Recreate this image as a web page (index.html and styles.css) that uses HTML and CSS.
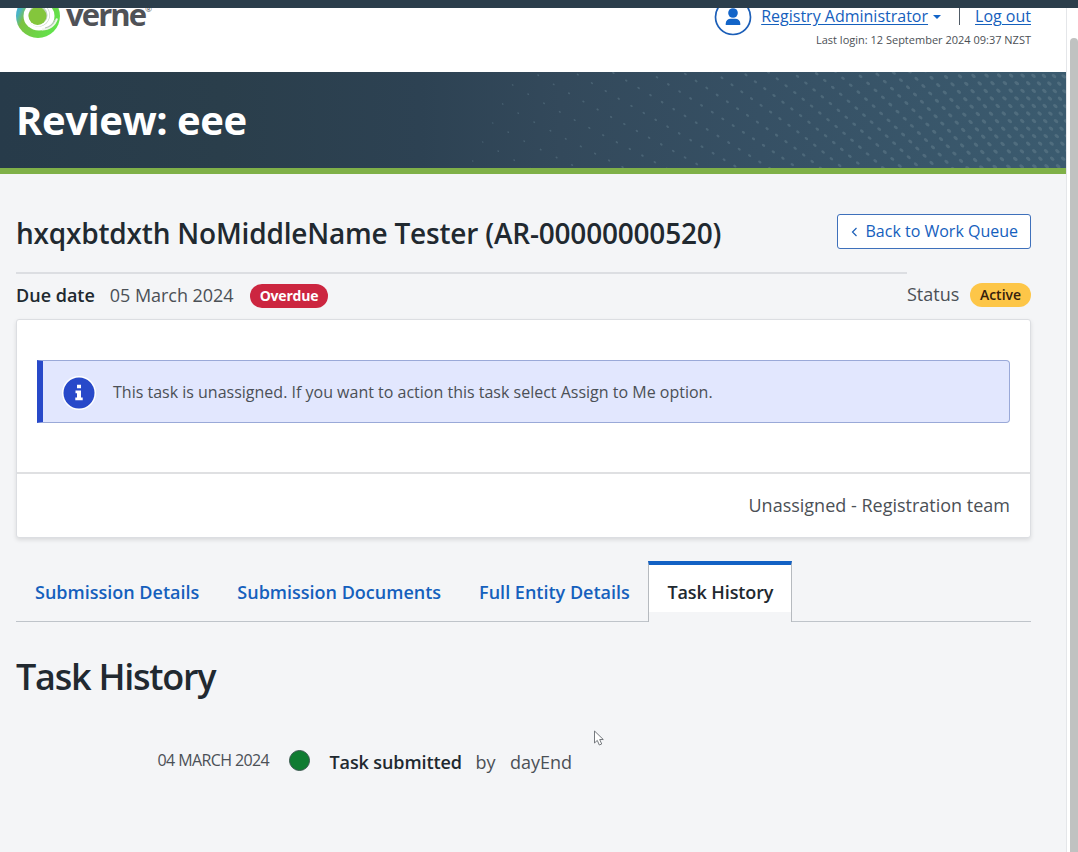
FILE: index.html
```
<!DOCTYPE html>
<html lang="en">
<head>
<meta charset="utf-8">
<title>Review: eee</title>
<link rel="stylesheet" href="styles.css">
</head>
<body>
<div class="window">
  <div class="topbar"></div>
  <div class="viewport">
    <div class="page">
      <header class="header">
        <div class="brand">
          <svg class="brand-mark" viewBox="0 0 46 46" width="46" height="46">
            <defs><linearGradient id="ring" x1="0" y1="0" x2="1" y2="0.500"><stop offset="0" stop-color="#35a9e8"/><stop offset=".22" stop-color="#4bb4c4"/><stop offset=".36" stop-color="#7cc242"/><stop offset="1" stop-color="#62e24a"/></linearGradient></defs>
            <circle cx="22" cy="22" r="22" fill="url(#ring)"/>
            <ellipse cx="23" cy="22" rx="15.500" ry="14.500" fill="#fff"/>
            <circle cx="22.500" cy="21" r="11.500" fill="#c3d3c4"/>
            <circle cx="22" cy="21" r="10.500" fill="none" stroke="#fff" stroke-width="1.800"/>
            <circle cx="21.500" cy="22" r="9" fill="#84c63c"/>
            <path d="M26 35.500c7 0 13-4 15-11" fill="none" stroke="#eef5ea" stroke-width="2"/>
            <path d="M29 34c5-1 8-4 10-8" fill="none" stroke="#b9c6bb" stroke-width="1.200"/>
          </svg>
          <span class="brand-name">verne</span><span class="brand-reg">®</span>
        </div>
        <div class="user">
          <svg class="avatar" viewBox="0 0 38 38" width="38" height="38">
            <circle cx="19" cy="19" r="17.500" fill="#fff" stroke="#1c5fb8" stroke-width="1.700"/>
            <circle cx="19" cy="15" r="4.800" fill="#1264c8"/>
            <path d="M11.700 27v-1.500a5 5 0 0 1 5-4.800h4.600a5 5 0 0 1 5 4.800V27z" fill="#1264c8"/>
          </svg>
          <div class="account">
            <div class="account-links">
              <a class="link link-user">Registry Administrator</a>
              <span class="caret"></span><span class="separator"></span>
              <a class="link link-logout">Log out</a>
            </div>
            <div class="last-login">Last login: 12 September 2024 09:37 NZST</div>
          </div>
        </div>
      </header>
      <div class="banner">
        <svg class="banner-dots" id="dots" viewBox="0 72 1066 96" width="1066" height="96"></svg>
        <h1 class="banner-title">Review: eee</h1>
      </div>
      <main class="main">
        <div class="title-row">
          <h2 class="entity-title">hxqxbtdxth NoMiddleName Tester (AR-00000000520)</h2>
          <a class="back"><svg viewBox="0 0 7 10" width="7" height="10"><path d="M5.500 1 1.500 5l4 4" fill="none" stroke="#1c5fb8" stroke-width="1.200"/></svg><span>Back to Work Queue</span></a>
        </div>
        <div class="meta">
          <div class="due"><b class="due-label">Due date</b><span class="due-value">05 March 2024</span><span class="badge badge-overdue">Overdue</span></div>
          <div class="status"><span class="status-label">Status</span><span class="badge badge-active">Active</span></div>
        </div>
        <section class="card">
          <div class="card-body">
            <div class="alert">
              <svg class="alert-icon" viewBox="0 0 34 34" width="34" height="34"><circle cx="17" cy="17" r="17" fill="#fff"/><circle cx="17" cy="17" r="15.500" fill="#2849c9"/><path d="M15 8.800h4v3.500h-4zM13.500 14.500H19v7h1.700v2.700h-7.400v-2.700H15v-4.300h-1.500z" fill="#fff"/></svg>
              <span class="alert-text">This task is unassigned. If you want to action this task select Assign to Me option.</span>
            </div>
          </div>
          <div class="card-foot"><span class="assignee">Unassigned - Registration team</span></div>
        </section>
        <nav class="tabs">
          <a class="tab">Submission Details</a><a class="tab">Submission Documents</a><a class="tab">Full Entity Details</a><a class="tab tab-active">Task History</a>
        </nav>
        <h2 class="section-title">Task History</h2>
        <div class="event">
          <span class="event-date">04 MARCH 2024</span>
          <span class="event-dot"></span>
          <b class="event-name">Task submitted</b><span class="event-by">by</span><span class="event-user">dayEnd</span>
        </div>
      </main>
    </div>
    <div class="scrollbar"><div class="thumb"></div></div>
  </div>
  <svg class="cursor" viewBox="0 0 12 18" width="12" height="18"><path d="M1.500 1v12l2.800-2.600 2 4.600 2.400-1-2-4.500h3.600z" fill="#fff" stroke="#666b70" stroke-width=".9"/></svg>
</div>
<script src="dots.js"></script>
</body>
</html>
```
FILE: styles.css
```
* { box-sizing: border-box; }
body { margin: 0; font-family: "Open Sans", sans-serif; color: #4b5056; font-size: 18px; }
h1, h2 { margin: 0; }
b, h2 { font-weight: 600; }
span, a, h1, h2 { white-space: nowrap; }
.window { position: relative; width: 1078px; height: 852px; overflow: hidden; display: flex; flex-direction: column; background: #f4f5f7; }
.topbar { height: 8px; background: #2b3e4b; flex: none; }
.viewport { flex: 1; display: flex; min-height: 0; }
.page { width: 1067px; overflow: hidden; border-right: 1px solid #e4e6e9; }
.header { height: 64px; background: #fff; display: flex; justify-content: space-between; padding: 0 35px 0 16px; }
.brand { display: flex; margin-top: -14px; height: 46px; }
.brand-name { font-size: 31px; font-weight: 700; letter-spacing: -1.9px; color: #505257; line-height: 40px; margin: 0 0 0 4px; }
.brand-reg { font-size: 8px; line-height: 12px; margin: 9px 0 0 0; }
.user { display: flex; }
.avatar { margin: -10px 9px 0 0; }
.account { display: flex; flex-direction: column; align-items: flex-end; }
.account-links { display: flex; height: 26px; margin-top: -4px; line-height: 24px; font-size: 16px; }
.link { color: #1560bd; text-decoration: underline; text-underline-offset: 2px; }
.caret { border: 4px solid transparent; border-top-color: #1264c8; border-bottom: 0; height: 4px; margin: 11px 17px 0 5px; }
.separator { width: 1px; height: 20px; background: #505b66; margin: 1px 15px 0 1px; }
.last-login { font-size: 11px; line-height: 18px; margin-top: 1px; }
.banner { height: 102px; border-bottom: 6px solid #7fb048; background: linear-gradient(90deg, #273b4a 0, #2a3e4b 220px, #2d4253 420px, #33495b 560px, #365064 760px, #3b5b6f 1066px); position: relative; }
.banner-dots { position: absolute; inset: 0; }
.banner-title { position: relative; font-size: 40px; font-weight: 700; line-height: 96px; letter-spacing: -.45px; color: #fff; padding-left: 16px; }
.main { padding: 40px 35px 0 16px; }
.title-row { display: flex; justify-content: space-between; height: 58px; }
.entity-title { font-size: 28px; line-height: 38px; letter-spacing: -.2px; color: #212930; }
.back { height: 35px; width: 194px; border: 1px solid #3e70bb; border-radius: 3px; background: #fff; color: #1560bd; font-size: 16px; line-height: 33px; display: flex; align-items: center; justify-content: space-between; padding: 0 12px 0 13px; }
.meta { display: flex; height: 47px; }
.due { width: 891px; border-top: 2px solid #dcdee2; display: flex; line-height: 42px; }
.due-label { color: #212930; }
.due-value { margin-left: 15px; letter-spacing: -.05px; }
.badge { height: 24px; border-radius: 12px; font-size: 14px; font-weight: 600; line-height: 24px; text-align: center; }
.badge-overdue { width: 78px; margin: 10px 0 0 16.5px; background: #cc2640; color: #fff; font-weight: 700; letter-spacing: -.2px; }
.status { display: flex; flex: 1; justify-content: space-between; line-height: 44px; }
.badge-active { width: 61px; margin-top: 11px; background: #fdc648; color: #35200d; }
.card { height: 219px; border: 1px solid #dcdee2; border-radius: 3px; background: #fff; box-shadow: 0 2px 4px #0000001c; }
.card-body { height: 154px; padding: 40px 20px 0; border-bottom: 2px solid #dfe0e2; }
.alert { height: 63px; border: 1px solid #9aa9d8; border-left: 6px solid #2849c9; border-radius: 0 4px 4px 0; background: #e2e7fe; display: flex; align-items: flex-start; padding-left: 19px; }
.alert-icon { margin: 15px 17px 0 0; }
.alert-text { font-size: 16px; line-height: 63px; height: 61px; }
.card-foot { height: 63px; line-height: 63px; padding-right: 20px; text-align: right; }
.tabs { display: flex; height: 61px; margin-top: 23px; box-shadow: inset 0 -1px #bfc4ca; }
.tab { padding: 0 19px; color: #1560bd; font-weight: 600; line-height: 62px; }
.tab-active { background: linear-gradient(#fff 47px, #f4f5f7 47px); border: 1px solid #b6babf; border-top: 4px solid #1261c4; border-bottom: 0; padding: 0 18px; margin-left: -.4px; color: #212930; line-height: 54px; letter-spacing: -.1px; }
.section-title { font-size: 36px; line-height: 50px; margin-top: 30px; letter-spacing: -1.25px; color: #212930; }
.event { display: flex; align-items: center; height: 30px; margin: 45px 0 0 141.5px; }
.event-date { font-size: 16px; letter-spacing: -.6px; width: 132px; position: relative; top: -2px; }
.event-dot { width: 21px; height: 21px; border-radius: 50%; background: #107c32; border: 1px solid #3b5750; margin: -4px 20px 0 -1px; }
.event-name { color: #212930; width: 146px; letter-spacing: -.1px; }
.event-by { width: 34.5px; }
.scrollbar { width: 11px; background: #fff; padding: 30px 0 0 3px; }
.thumb { height: 814px; background: #c0c2c1; border-radius: 4px 4px 0 0; }
.cursor { position: absolute; left: 593px; top: 730px; }
```
FILE: dots.js
```
// Halftone field: a lattice that tightens toward the right edge of the banner.
const svg = document.getElementById("dots");
const stops = [[540, 15.5, 9.2, -10, 19], [640, 11.7, 7.2, -7, 18], [800, 8.3, 6.8, -2.7, 16.3], [1000, 5.8, 7.6, -0.7, 15.2], [1060, 5.2, 7.6, 0.8, 15]];
function lattice(x) {
  if (x <= stops[0][0]) return stops[0].slice(1);
  for (let i = 1; i < stops.length; i++) {
    const p = stops[i - 1], q = stops[i];
    if (x <= q[0]) {
      const t = (x - p[0]) / (q[0] - p[0]);
      return p.slice(1).map((v, k) => v + (q[k + 1] - v) * t);
    }
  }
  return stops[stops.length - 1].slice(1);
}
function dot(x, y) {
  const t = Math.min(1, (x - 480) / 500);
  const e = document.createElementNS("http://www.w3.org/2000/svg", "ellipse");
  e.setAttribute("rx", 0.9 + 1.7 * t);
  e.setAttribute("ry", 0.7 + 0.9 * t);
  e.setAttribute("transform", `translate(${x.toFixed(1)} ${y.toFixed(1)}) rotate(38)`);
  e.setAttribute("fill", "#627d8c");
  e.setAttribute("opacity", 0.45 + 0.1 * t);
  svg.appendChild(e);
}
let x = 512.7, y = 85;
while (x < 1075) {
  let cx = x, cy = y;
  while (cy < 170) {
    dot(cx, cy);
    const v = lattice(cx);
    cx += v[2];
    cy += v[3];
  }
  let v = lattice(x);
  x += v[0];
  y += v[1];
  v = lattice(x);
  while (y - v[3] > 70) {
    x -= v[2];
    y -= v[3];
  }
}
```
